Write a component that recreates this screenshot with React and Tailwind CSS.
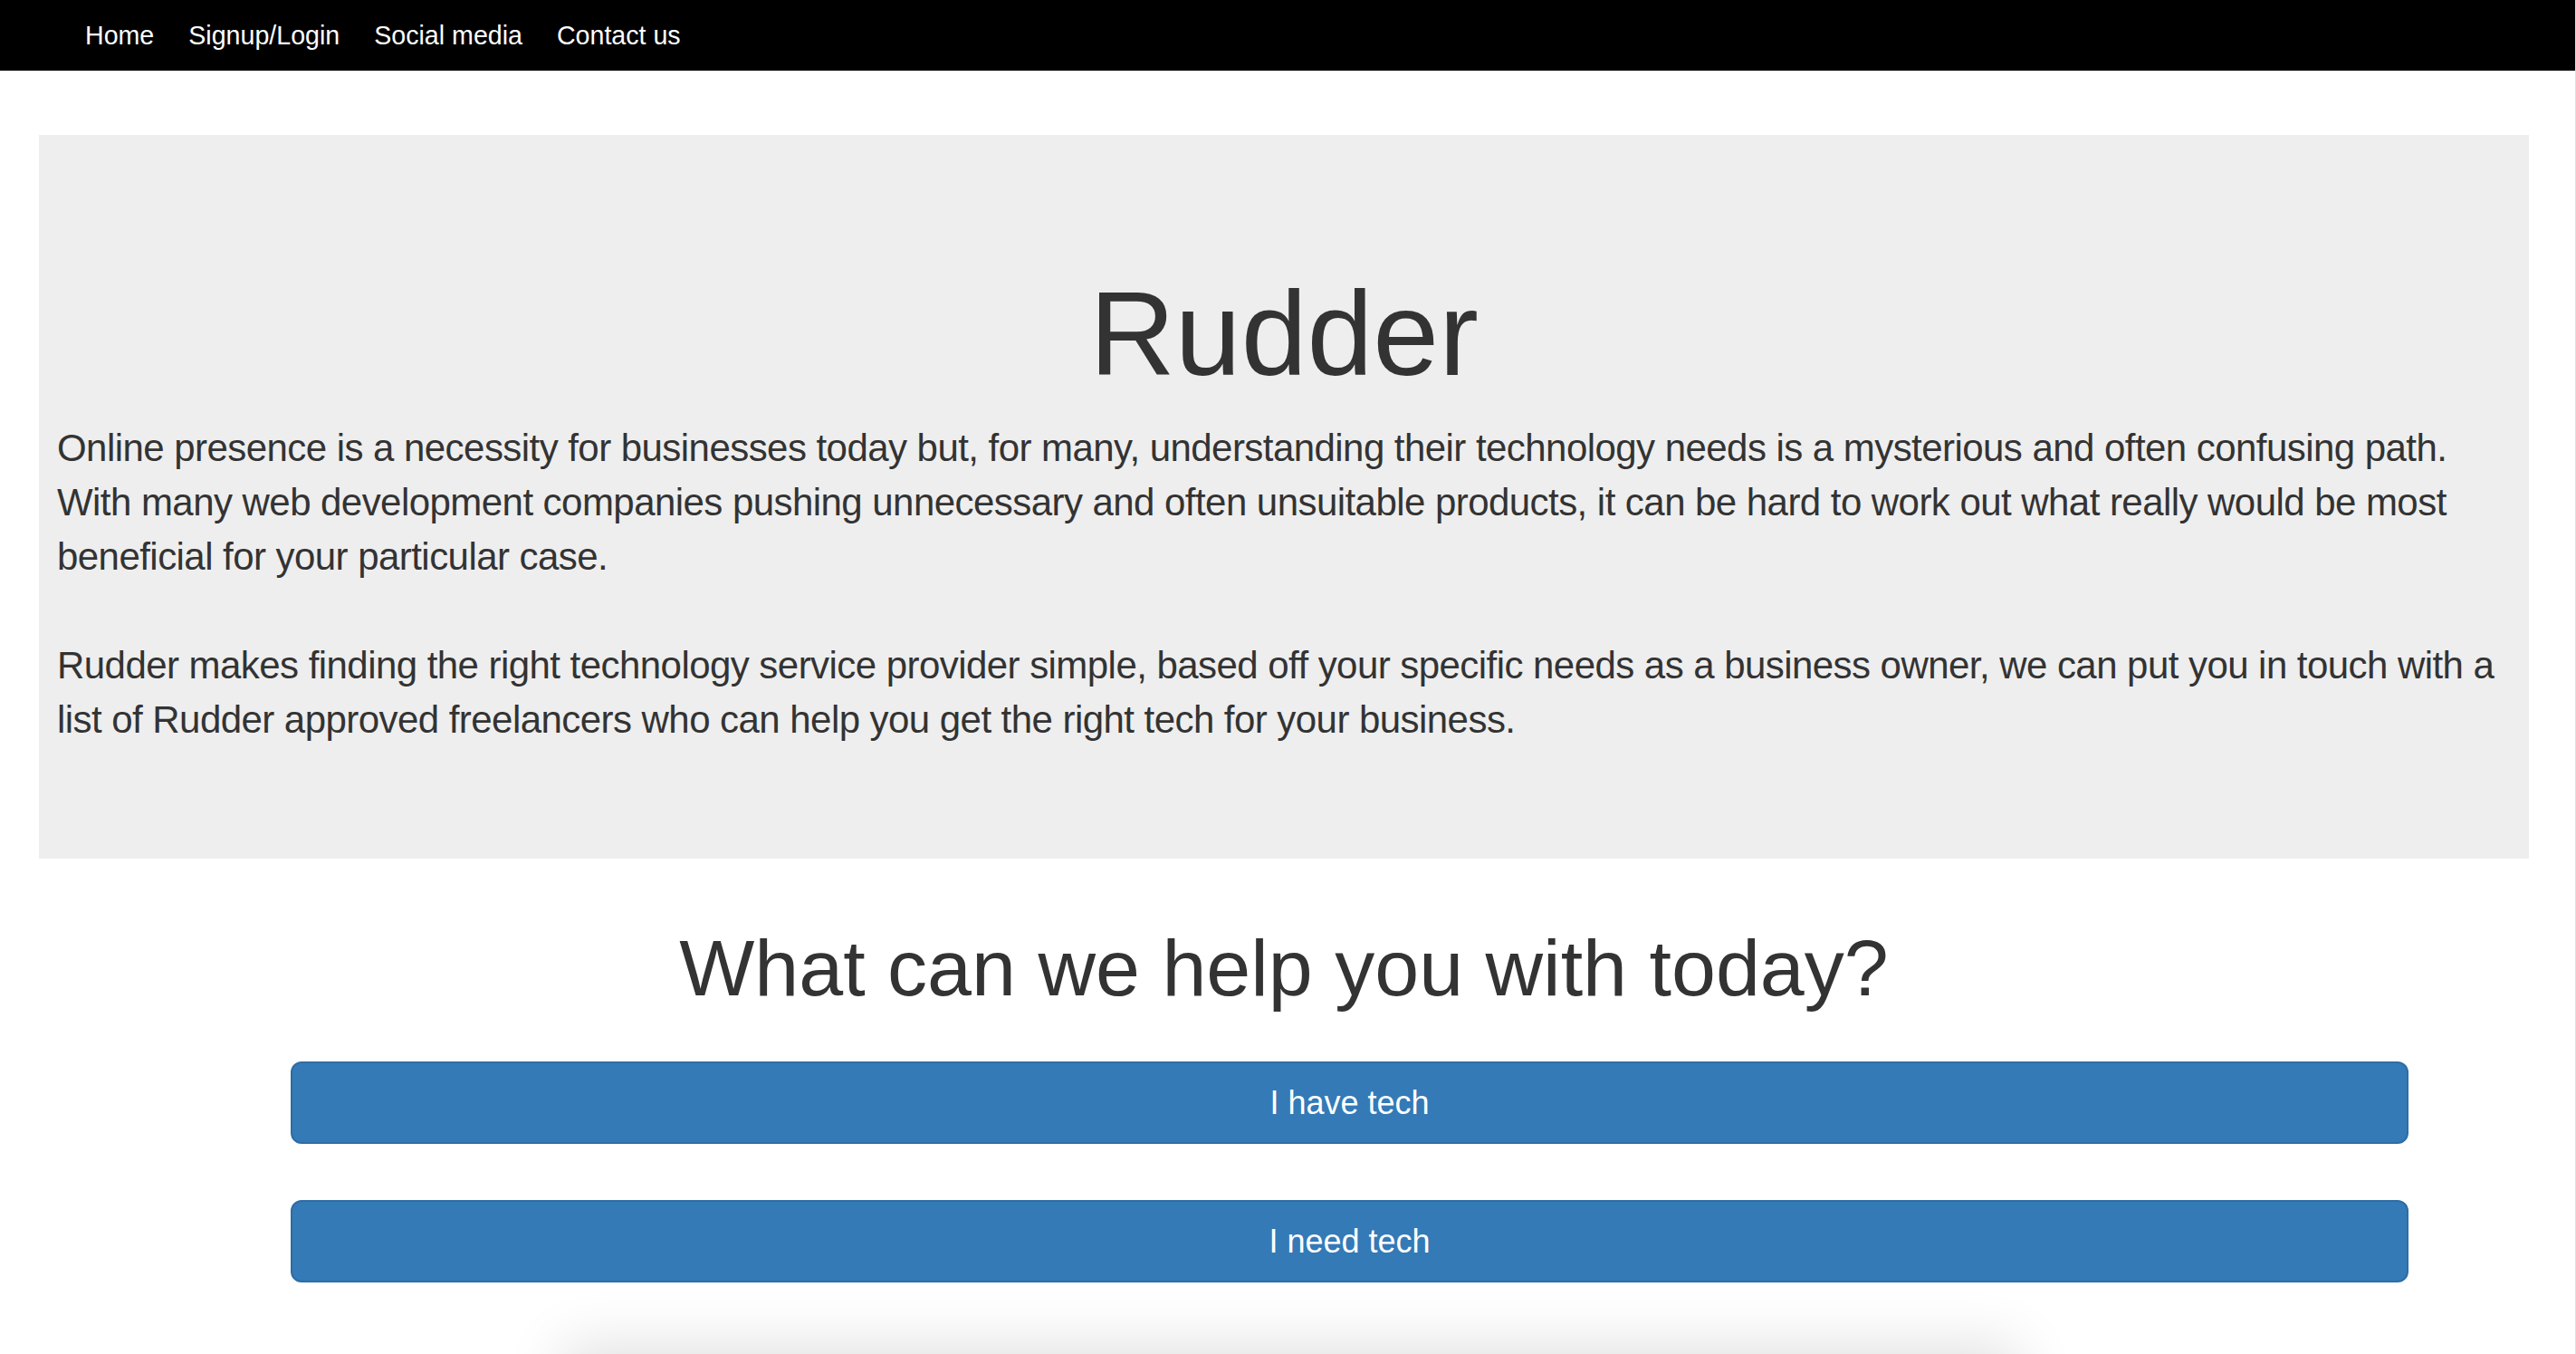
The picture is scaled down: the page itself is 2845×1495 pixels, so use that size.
import React from "react";

const font = { fontFamily: '"Liberation Sans", Arial, Helvetica, sans-serif' };

const navLinks = ["Home", "Signup/Login", "Social media", "Contact us"];

const ChoiceButton = ({ children }) => (
  <button className="w-full h-[91px] rounded-[12px] border-2 border-[#2e6da4] bg-[#337ab7] text-white text-[36px] leading-[48px]">
    {children}
  </button>
);

export default function App() {
  return (
    <div
      className="min-h-screen bg-white text-[#333333] border-r border-[#dedede] overflow-hidden"
      style={font}
    >
      {/* top nav */}
      <nav className="h-[78px] bg-black flex items-center pl-[94px] gap-[38px]">
        {navLinks.map((l) => (
          <a key={l} className="text-white text-[28.6px] leading-[40px]">
            {l}
          </a>
        ))}
      </nav>

      <div className="pl-[43px] pr-[51px] pt-[71px]">
        {/* jumbotron */}
        <section className="bg-[#eeeeee] pt-[150px] px-[20px] pb-[123px]">
          <h1 className="text-center text-[131px] leading-[139px] font-medium">
            Rudder
          </h1>
          <p className="mt-[27px] text-[42px] leading-[60px] font-light tracking-[-0.55px]">
            Online presence is a necessity for businesses today but, for many,
            understanding their technology needs is a mysterious and often
            confusing path. With many web development companies pushing
            unnecessary and often unsuitable products, it can be hard to work
            out what really would be most beneficial for your particular case.
          </p>
          <p className="mt-[60px] text-[42px] leading-[60px] font-light tracking-[-0.55px]">
            Rudder makes finding the right technology service provider simple,
            based off your specific needs as a business owner, we can put you in
            touch with a list of Rudder approved freelancers who can help you
            get the right tech for your business.
          </p>
        </section>

        <h2 className="mt-[75px] text-center text-[88px] leading-[92px] font-medium">
          What can we help you with today?
        </h2>

        <div className="ml-[278px] w-[2339px] mt-[57px] flex flex-col gap-[62px]">
          <ChoiceButton>I have tech</ChoiceButton>
          <ChoiceButton>I need tech</ChoiceButton>
        </div>

        {/* card peeking in at the bottom */}
        <div className="ml-[577px] w-[1610px] h-[300px] mt-[79px] bg-white shadow-[0_-10px_60px_rgba(0,0,0,0.12)]" />
      </div>
    </div>
  );
}
